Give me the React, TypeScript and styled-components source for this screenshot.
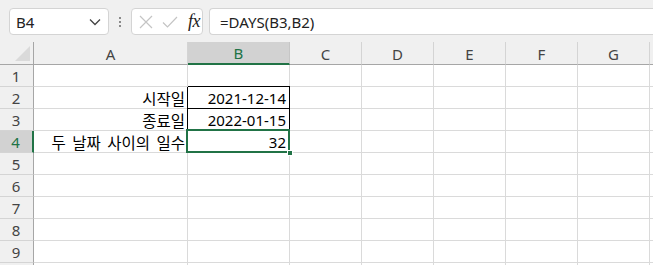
import React from "react";
import styled, { createGlobalStyle } from "styled-components";

const GlobalStyle = createGlobalStyle`
    html, body {
        margin: 0;
        padding: 0;
        background: #ffffff;
        overflow: hidden;
    }
    body {
        font-family: "Segoe UI", "Noto Sans", "Noto Sans CJK KR", sans-serif;
        color: #000;
    }
`

const Page = styled.div`
    width: 653px;
    height: 265px;
    overflow: hidden;
    background: #ffffff;
`

const Toolbar = styled.div`
    height: 42px;
    background: #f0f0f0;
    display: flex;
    align-items: flex-start;
    padding: 8px 0 0 9px;
    box-sizing: border-box;
`

const NameBox = styled.div`
    width: 100px;
    height: 27px;
    box-sizing: border-box;
    background: #fff;
    border: 1px solid #d4d4d4;
    border-radius: 4px;
    display: flex;
    align-items: center;
    justify-content: space-between;
    padding: 0 7px 0 6px;
    font-size: 15px;
    color: #222;
`

const Grip = styled.div`
    width: 22px;
    height: 27px;
    display: flex;
    flex-direction: column;
    align-items: center;
    justify-content: center;
    gap: 2px;
    span {
        width: 2px;
        height: 2px;
        background: #8a8a8a;
    }
`

const FxBox = styled.div`
    width: 72px;
    height: 27px;
    box-sizing: border-box;
    background: #fff;
    border: 1px solid #d4d4d4;
    border-radius: 4px;
    display: flex;
    align-items: center;
    padding: 0 0 0 7px;
    gap: 9px;
    margin-right: 6px;
`

const FxLabel = styled.span`
    font-family: "Liberation Serif", "DejaVu Serif", serif;
    font-style: italic;
    font-size: 18px;
    color: #222;
    letter-spacing: -0.5px;
    margin-left: 1px;
`

const FormulaBox = styled.div`
    flex: 1;
    height: 27px;
    box-sizing: border-box;
    background: #fff;
    border: 1px solid #d4d4d4;
    border-right: none;
    border-radius: 4px 0 0 4px;
    display: flex;
    align-items: center;
    padding-left: 10px;
    font-size: 15px;
    color: #222;
`

const Sheet = styled.div`
    display: grid;
    grid-template-columns: 34px 154px 102px repeat(6, 72px);
    grid-auto-rows: 22px;
    grid-template-rows: 23px;
    background: #fff;
`

const ColHead = styled.div<{ $active?: boolean }>`
    background: ${({ $active }) => ($active ? "#d2d2d2" : "#f0f0f0")};
    border-right: 1px solid ${({ $active }) => ($active ? "#c6c6c6" : "#d4d4d4")};
    border-bottom: ${({ $active }) => ($active ? "2px solid #217346" : "1px solid #a6a6a6")};
    box-sizing: border-box;
    display: flex;
    align-items: center;
    justify-content: center;
    font-size: 15px;
    color: ${({ $active }) => ($active ? "#217346" : "#444")};
    padding-top: 1px;
`

const Corner = styled.div`
    background: #f0f0f0;
    border-right: 1px solid #a6a6a6;
    border-bottom: 1px solid #a6a6a6;
    box-sizing: border-box;
    position: relative;
    &::after {
        content: "";
        position: absolute;
        right: 3px;
        bottom: 3px;
        width: 0;
        height: 0;
        border-left: 15px solid transparent;
        border-bottom: 15px solid #dadada;
    }
`

const RowHead = styled.div<{ $active?: boolean }>`
    background: ${({ $active }) => ($active ? "#d2d2d2" : "#f0f0f0")};
    border-right: ${({ $active }) => ($active ? "2px solid #217346" : "1px solid #a6a6a6")};
    border-bottom: 1px solid #d4d4d4;
    box-sizing: border-box;
    display: flex;
    align-items: center;
    justify-content: center;
    font-size: 15px;
    color: ${({ $active }) => ($active ? "#217346" : "#444")};
    padding-right: 1px;
`

const Cell = styled.div<{ $boxed?: boolean; $top?: boolean }>`
    border-right: 1px solid ${({ $boxed }) => ($boxed ? "#000" : "#dadada")};
    border-bottom: 1px solid ${({ $boxed }) => ($boxed ? "#000" : "#dadada")};
    box-shadow: ${({ $boxed, $top }) =>
        $boxed ? `-1px 0 0 #000${$top ? ", 0 -1px 0 #000" : ""}` : "none"};
    box-sizing: border-box;
    display: flex;
    align-items: center;
    justify-content: flex-end;
    padding: 1px 3px 0 0;
    font-size: 15px;
    white-space: nowrap;
    overflow: visible;
    position: relative;
`

const Label = styled(Cell)`
    font-family: "Noto Sans CJK KR", "Noto Sans", sans-serif;
    font-size: 15.5px;
    word-spacing: 3px;
    padding-right: 2px;
`

const Selected = styled(Cell)`
    &::after {
        content: "";
        position: absolute;
        left: -2px;
        top: -2px;
        right: -1px;
        bottom: -1px;
        border: 2px solid #217346;
        pointer-events: none;
    }
    &::before {
        content: "";
        position: absolute;
        right: -4px;
        bottom: -4px;
        width: 6px;
        height: 6px;
        background: #217346;
        border: 1px solid #fff;
        box-sizing: border-box;
        z-index: 2;
    }
`

// H is only a sliver at the right edge, so its letter is not shown
const cols = ["A", "B", "C", "D", "E", "F", "G", ""];

const labels: Record<number, string> = {
    2: "시작일",
    3: "종료일",
    4: "두 날짜 사이의 일수",
};

const values: Record<number, string> = {
    2: "2021-12-14",
    3: "2022-01-15",
};

function IconX() {
    return (
        <svg width="14" height="14" viewBox="0 0 14 14">
            <path d="M1 1L13 13M13 1L1 13" stroke="#c4c4c4" strokeWidth="1.2" fill="none" />
        </svg>
    );
}

function IconCheck() {
    return (
        <svg width="16" height="14" viewBox="0 0 16 14">
            <path d="M1 7.5L5.5 12L15 2" stroke="#c4c4c4" strokeWidth="1.2" fill="none" />
        </svg>
    );
}

function Chevron() {
    return (
        <svg width="12" height="8" viewBox="0 0 12 8">
            <path d="M1 1.5L6 6.5L11 1.5" stroke="#444" strokeWidth="1.3" fill="none" />
        </svg>
    );
}

export default function App() {
    const rows = [1, 2, 3, 4, 5, 6, 7, 8, 9, 10];
    return (
        <Page>
            <GlobalStyle />
            <Toolbar>
                <NameBox>
                    <span>B4</span>
                    <Chevron />
                </NameBox>
                <Grip>
                    <span />
                    <span />
                    <span />
                </Grip>
                <FxBox>
                    <IconX />
                    <IconCheck />
                    <FxLabel>fx</FxLabel>
                </FxBox>
                <FormulaBox>=DAYS(B3,B2)</FormulaBox>
            </Toolbar>
            <Sheet>
                <Corner />
                {cols.map((c, i) => (
                    <ColHead key={i} $active={c === "B"}>{c}</ColHead>
                ))}
                {rows.map((r) => (
                    <React.Fragment key={r}>
                        <RowHead $active={r === 4}>{r < 10 ? r : ""}</RowHead>
                        <Label>{labels[r] ?? ""}</Label>
                        {r === 4 ? (
                            <Selected>32</Selected>
                        ) : (
                            <Cell $boxed={r === 2 || r === 3} $top={r === 2}>{values[r] ?? ""}</Cell>
                        )}
                        {cols.slice(2).map((c, i) => (
                            <Cell key={i} />
                        ))}
                    </React.Fragment>
                ))}
            </Sheet>
        </Page>
    );
}
